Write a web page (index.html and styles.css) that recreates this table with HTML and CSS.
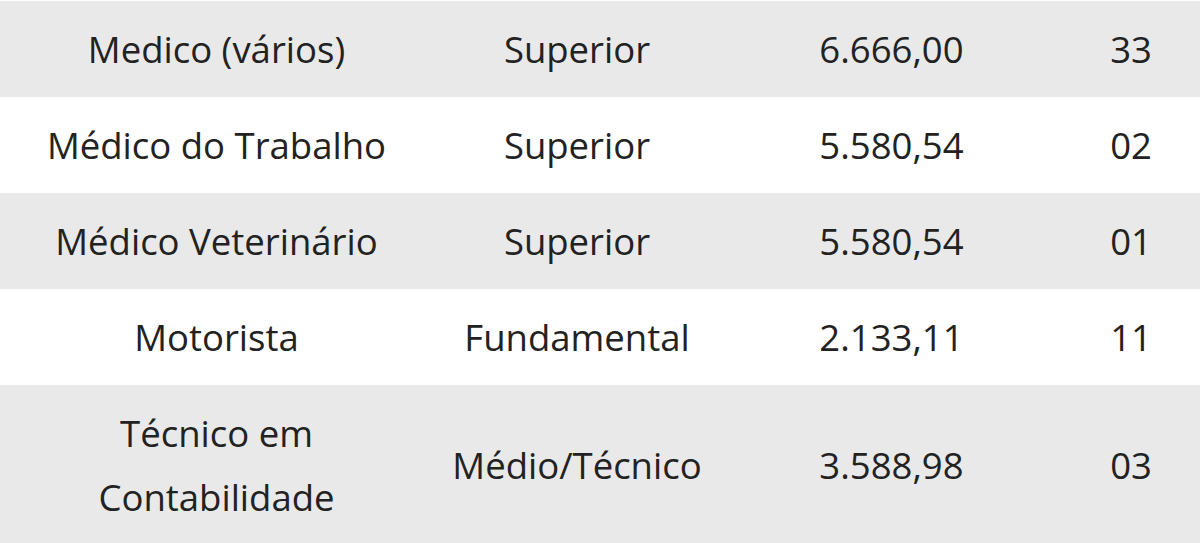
FILE: index.html
```html
<!DOCTYPE html>
<html lang="pt">
<head>
<meta charset="utf-8">
<title>Tabela</title>
<link rel="stylesheet" href="styles.css">
</head>
<body>
<table class="vagas">
  <colgroup>
    <col class="c1"><col class="c2"><col class="c3"><col class="c4">
  </colgroup>
  <tbody>
    <tr class="odd"><td>Medico (vários)</td><td>Superior</td><td>6.666,00</td><td>33</td></tr>
    <tr class="even"><td>Médico do Trabalho</td><td>Superior</td><td>5.580,54</td><td>02</td></tr>
    <tr class="odd"><td>Médico Veterinário</td><td>Superior</td><td>5.580,54</td><td>01</td></tr>
    <tr class="even"><td>Motorista</td><td>Fundamental</td><td>2.133,11</td><td>11</td></tr>
    <tr class="odd"><td>Técnico em Contabilidade</td><td>Médio/Técnico</td><td>3.588,98</td><td>03</td></tr>
  </tbody>
</table>
</body>
</html>
```

FILE: styles.css
```css
html, body {
  margin: 0;
  padding: 0;
  background: #ffffff;
}
body {
  padding-top: 1px;
}
.vagas {
  width: 1200px;
  border-collapse: collapse;
  table-layout: fixed;
  font-family: "Open Sans", "Noto Sans", sans-serif;
  font-size: 36.5px;
  line-height: 64px;
  color: #222222;
}
.c1 { width: 433px; }
.c2 { width: 288px; }
.c3 { width: 341px; }
.c4 { width: 138px; }
.vagas td {
  padding: 16px 16px;
  text-align: center;
  vertical-align: middle;
}
.odd { background: #e9e9e9; }
.even { background: #ffffff; }
```
